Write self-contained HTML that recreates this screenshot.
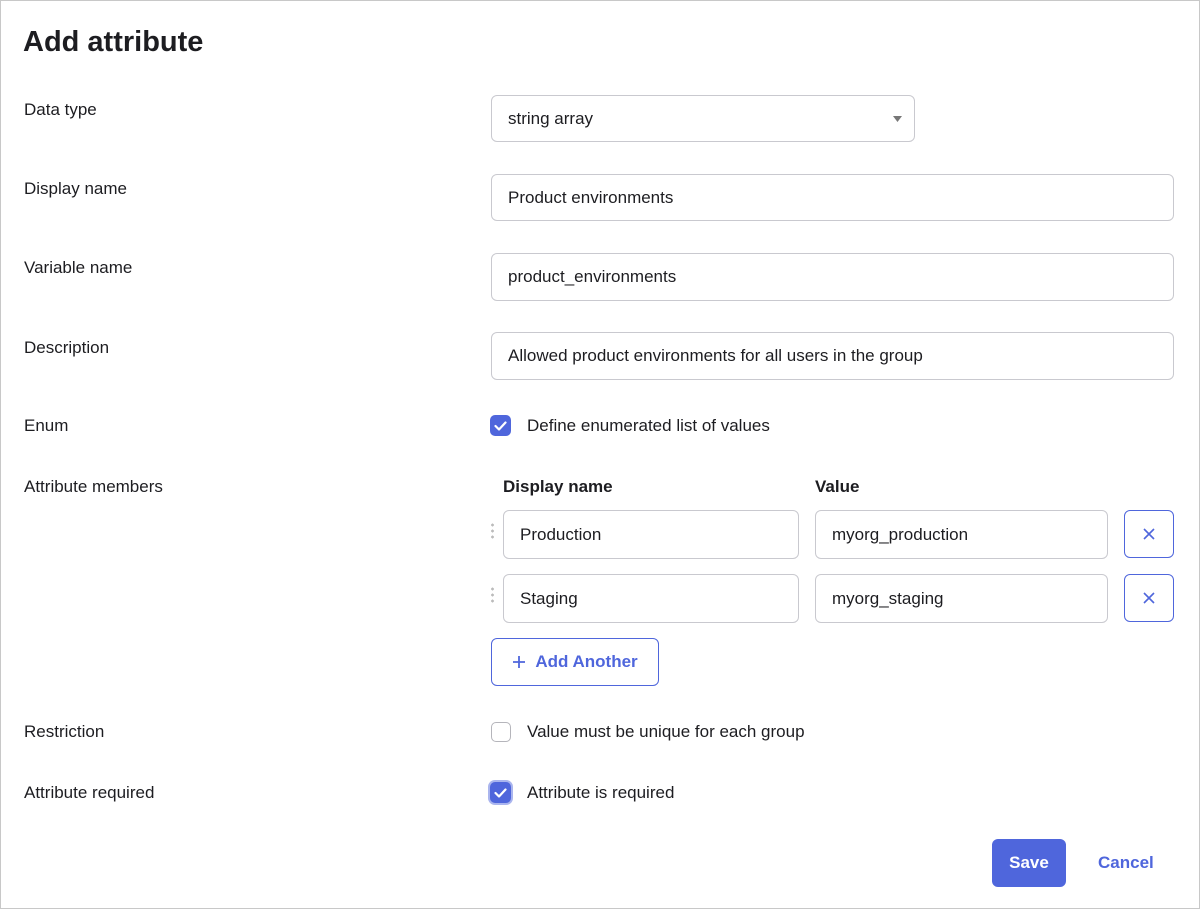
<!DOCTYPE html>
<html><head><style>
*{box-sizing:border-box;margin:0;padding:0}
body{width:1200px;height:909px;background:#fff;font-family:"Liberation Sans",sans-serif;color:#1d1d21;position:relative;overflow:hidden}
.frame{position:absolute;left:0;top:0;width:1200px;height:909px;border:1px solid #c8c8c8}
.a{position:absolute}
.lbl{position:absolute;left:24px;font-size:17px;color:#1d1d21}
.inp{position:absolute;border:1px solid #c9c9cf;border-radius:6px;font-size:17px;padding-left:16px;display:flex;align-items:center;color:#1d1d21;background:#fff}
.cb{position:absolute;width:21px;height:21px;border-radius:5px;background:#4f66dc;display:flex;align-items:center;justify-content:center}
.xb{position:absolute;width:50px;height:48px;border:1px solid #4f66dc;border-radius:6px;color:#4f66dc;display:flex;align-items:center;justify-content:center}
.txt{position:absolute;font-size:17px}
.dots{position:absolute;width:3px;height:18px;background:radial-gradient(circle,#bbb 1.3px,transparent 1.5px) 0 0/3px 6px}
</style></head><body>
<div class="frame"></div>
<div class="a" style="left:23px;top:26px;font-size:29px;font-weight:bold;color:#1d1d21">Add attribute</div>

<div class="lbl" style="top:100px">Data type</div>
<div class="inp" style="left:491px;top:95px;width:424px;height:47px">string array
<svg class="a" style="right:12px;top:20px" width="9" height="6"><path d="M0 0h9L4.5 6z" fill="#777"/></svg></div>

<div class="lbl" style="top:179px">Display name</div>
<div class="inp" style="left:491px;top:174px;width:683px;height:47px">Product environments</div>

<div class="lbl" style="top:258px">Variable name</div>
<div class="inp" style="left:491px;top:253px;width:683px;height:48px">product_environments</div>

<div class="lbl" style="top:338px">Description</div>
<div class="inp" style="left:491px;top:332px;width:683px;height:48px">Allowed product environments for all users in the group</div>

<div class="lbl" style="top:416px">Enum</div>
<div class="cb" style="left:490px;top:415px"><svg width="13" height="10"><path d="M1.5 5l3.5 3.5L11.5 1.5" stroke="#fff" stroke-width="2.2" fill="none" stroke-linecap="round" stroke-linejoin="round"/></svg></div>
<div class="txt" style="left:527px;top:416px">Define enumerated list of values</div>

<div class="lbl" style="top:477px">Attribute members</div>
<div class="txt" style="left:503px;top:477px;font-weight:bold">Display name</div>
<div class="txt" style="left:815px;top:477px;font-weight:bold">Value</div>

<div class="dots" style="left:491px;top:522px"></div>
<div class="inp" style="left:503px;top:510px;width:296px;height:49px">Production</div>
<div class="inp" style="left:815px;top:510px;width:293px;height:49px">myorg_production</div>
<div class="xb" style="left:1124px;top:510px"><svg width="12" height="12"><path d="M1 1l10 10M11 1L1 11" stroke="#4f66dc" stroke-width="1.6"/></svg></div>

<div class="dots" style="left:491px;top:586px"></div>
<div class="inp" style="left:503px;top:574px;width:296px;height:49px">Staging</div>
<div class="inp" style="left:815px;top:574px;width:293px;height:49px">myorg_staging</div>
<div class="xb" style="left:1124px;top:574px"><svg width="12" height="12"><path d="M1 1l10 10M11 1L1 11" stroke="#4f66dc" stroke-width="1.6"/></svg></div>

<div class="a" style="left:491px;top:638px;width:168px;height:48px;border:1px solid #4f66dc;border-radius:6px;display:flex;align-items:center;justify-content:center;color:#4f66dc;font-weight:bold;font-size:17px">
<svg width="14" height="14" style="margin-right:9px"><path d="M7 1v12M1 7h12" stroke="#4f66dc" stroke-width="1.8"/></svg>Add Another</div>

<div class="lbl" style="top:722px">Restriction</div>
<div class="a" style="left:491px;top:722px;width:20px;height:20px;border:1px solid #b5b5bb;border-radius:5px"></div>
<div class="txt" style="left:527px;top:722px">Value must be unique for each group</div>

<div class="lbl" style="top:783px">Attribute required</div>
<div class="cb" style="left:490px;top:782px;box-shadow:0 0 0 2px #aab5ee"><svg width="13" height="10"><path d="M1.5 5l3.5 3.5L11.5 1.5" stroke="#fff" stroke-width="2.2" fill="none" stroke-linecap="round" stroke-linejoin="round"/></svg></div>
<div class="txt" style="left:527px;top:783px">Attribute is required</div>

<div class="a" style="left:992px;top:839px;width:74px;height:48px;background:#4f66dc;border-radius:6px;color:#fff;font-weight:bold;font-size:17px;display:flex;align-items:center;justify-content:center">Save</div>
<div class="a" style="left:1098px;top:853px;color:#4f66dc;font-weight:bold;font-size:17px">Cancel</div>
</body></html>
